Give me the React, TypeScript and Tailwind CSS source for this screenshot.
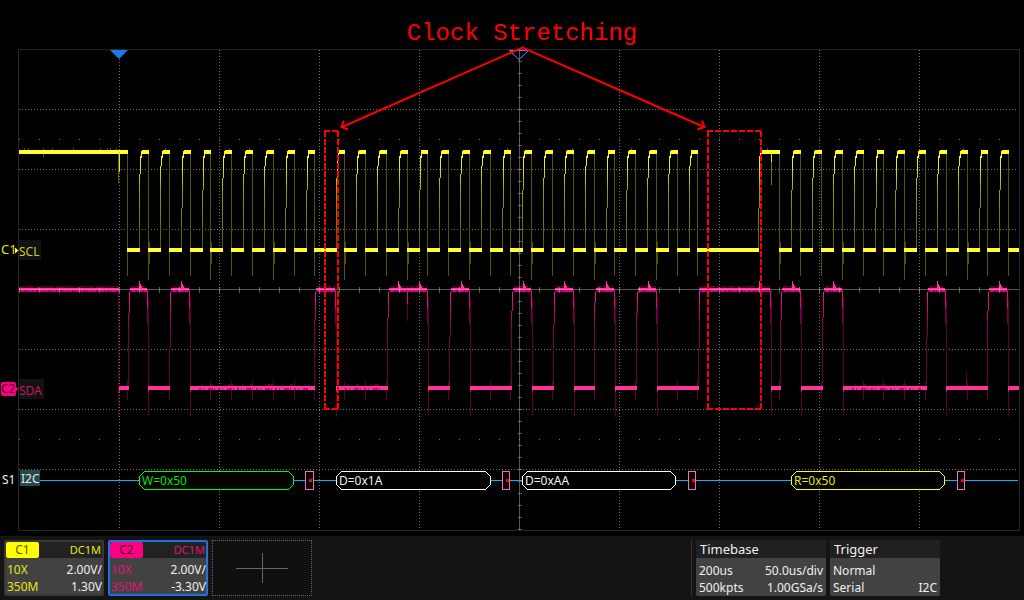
import React from "react";

const YELLOW = "#ffff33";
const PINK = "#ff3399";

const range = (count: number, start: number, step: number) =>
  Array.from({ length: count }, (_, i) => Math.round(start + i * step));

const firstFalls = range(10, 127.1, 20.8);
const secondFalls = range(18, 344.2, 20.78);
const thirdFalls = range(12, 779.3, 20.8);
const clockFalls = [...firstFalls, ...secondFalls, ...thirdFalls];

const clockLows: [number, number][] = [
  ...firstFalls.map((x, i): [number, number] => [x, i === 9 ? 336 : x + 12]),
  ...secondFalls.map((x, i): [number, number] => [x, i === 17 ? 758 : x + 12]),
  ...thirdFalls.map((x): [number, number] => [x, Math.min(x + 12, 1018)]),
];

type DataHigh = { from: number; to: number; peaks: number[] };

const dataHighs: DataHigh[] = [
  { from: 128, to: 147, peaks: [139] },
  { from: 169, to: 189, peaks: [181] },
  { from: 314, to: 335, peaks: [] },
  { from: 387, to: 427, peaks: [398, 419] },
  { from: 449, to: 469, peaks: [461] },
  { from: 511, to: 531, peaks: [523] },
  { from: 553, to: 573, peaks: [564] },
  { from: 594, to: 614, peaks: [606] },
  { from: 636, to: 656, peaks: [648] },
  { from: 698, to: 770, peaks: [759] },
  { from: 780, to: 800, peaks: [792] },
  { from: 822, to: 842, peaks: [833] },
  { from: 926, to: 945, peaks: [937] },
  { from: 987, to: 1007, peaks: [999] },
];

const dataLows: [number, number][] = [
  [119, 129],
  ...dataHighs.map((h, i): [number, number] => [
    h.to + 1,
    i + 1 < dataHighs.length ? dataHighs[i + 1].from + 1 : 1019,
  ]),
];

const packets = [
  { x: 139, w: 155, text: "W=0x50", color: "#00ff00", fill: "#00e600" },
  { x: 336, w: 155, text: "D=0x1A", color: "#ffffff", fill: "#f0f0f0" },
  { x: 522, w: 154, text: "D=0xAA", color: "#ffffff", fill: "#f0f0f0" },
  { x: 791, w: 154, text: "R=0x50", color: "#ffff00", fill: "#e6e600" },
];

const acks = [
  { x: 305, w: 8 },
  { x: 502, w: 7 },
  { x: 688, w: 7 },
  { x: 957, w: 7 },
];

function Grid() {
  return (
    <g shapeRendering="crispEdges">
      <rect x="18.5" y="49.5" width="1001" height="481" fill="none" stroke="#262626" />
      {range(9, 119, 100)
        .filter((x) => x !== 519)
        .map((x) => (
          <path key={x} d={`M${x + 0.5} 50V528`} stroke="#6e6e6e" strokeDasharray="1 2" />
        ))}
      {range(7, 109, 60)
        .filter((y) => y !== 289)
        .map((y) => (
          <path key={y} d={`M19 ${y + 0.5}H1017`} stroke="#6e6e6e" strokeDasharray="1 2" />
        ))}
      {[139, 439].map((y) => (
        <path key={y} d={`M19 ${y + 0.5}H1017`} stroke="#6e6e6e" strokeDasharray="1 19" />
      ))}
    </g>
  );
}

function Axes() {
  return (
    <g shapeRendering="crispEdges" fill="#cccccc" fillOpacity="0.42">
      <rect x="19" y="289" width="1000" height="1" />
      <rect x="519" y="50" width="1" height="480" />
      {range(50, 19, 20).map((x) => (
        <rect key={x} x={x} y="287" width="1" height="6" />
      ))}
      {range(40, 61, 12).map((y) => (
        <rect key={y} x="518" y={y} width="4" height="1" />
      ))}
    </g>
  );
}

function ClockTrace() {
  return (
    <g shapeRendering="crispEdges">
      {clockFalls.map((x, i) => (
        <g key={x}>
          <rect x={x} y="152" width="1" height={i % 3 === 1 ? 128 : 124} fill="#545400" />
          {i % 3 === 1 && <rect x={x + 1} y="242" width="1" height="22" fill="#545400" />}
          <rect
            x={i === 0 ? 119 : i === 28 ? 761 : x - 6}
            y="150"
            width={i === 0 ? 9 : i === 28 ? 19 : 7}
            height="4"
            fill={YELLOW}
          />
        </g>
      ))}
      {clockLows.map(([from, to], i) => {
        const split = [174, 166, 208, 190, 178][i % 5];
        return (
          <g key={from}>
            <rect x={from} y="248" width={to - from + 1} height="4" fill={YELLOW} />
            {to < 1018 && (
              <>
                <rect x={to} y={split} width="1" height={248 - split} fill="url(#clockRise)" />
                <rect x={to + 1} y="156" width="1" height={split - 156} fill="url(#clockRise)" />
                <rect x={to + 2} y="151" width="1" height="7" fill="#ffff00" />
              </>
            )}
          </g>
        );
      })}
      <rect x="19" y="150" width="100" height="4" fill={YELLOW} />
      <rect x="118" y="154" width="1" height="29" fill="#666600" />
      <rect x="119" y="152" width="1" height="20" fill="#e6e600" />
      <rect x="771" y="154" width="1" height="31" fill="#777700" />
      <rect x="771" y="152" width="1" height="10" fill="#e6e600" />
      {[24, 28, 43, 52, 73, 100, 107, 110, 116, 165, 229, 249, 507, 572, 631, 767, 963].map((x) => (
        <rect key={x} x={x} y="148" width="1" height="2" fill="#545400" />
      ))}
      <rect x="43" y="154" width="1" height="3" fill="#545400" />
    </g>
  );
}

function DataPlateau({ from, to }: { from: number; to: number }) {
  return (
    <g>
      <rect x={from} y="288" width={to - from} height="2" fill={PINK} />
      <rect x={from} y="290" width={to - from} height="2" fill="#99005c" />
      <path d={`M${from + 1} 287H${to}`} stroke="#590033" strokeWidth="2" strokeDasharray="5 1 8 2 3 1" />
      <path d={`M${from + 2} 291H${to}`} stroke="#e60080" strokeWidth="2" strokeDasharray="3 2 1 1 4 1" />
    </g>
  );
}

function DataTrace() {
  return (
    <g shapeRendering="crispEdges">
      {clockFalls.map((x) => {
        const isLow = dataLows.some(([from, to]) => x > from + 2 && x <= to);
        return isLow ? <rect key={x} x={x} y="381" width="1" height="19" fill="#590033" /> : null;
      })}
      {dataHighs.map(({ from, to, peaks }, i) => {
        const split = [313, 348, 320, 318, 337, 311, 324, 303][i % 8];
        return (
          <g key={from}>
            <rect x={from} y={split} width="1" height={386 - split} fill="url(#dataRise)" />
            <rect x={from + 1} y="292" width="1" height={split - 292} fill="url(#dataRise)" />
            <rect x={to} y="290" width="1" height="18" fill="#e60080" />
            <rect x={to} y="308" width="1" height="16" fill="#78004a" />
            <rect x={to + 1} y="298" width="1" height="119" fill="#590033" />
            <DataPlateau from={from + 2} to={to} />
            {peaks.map((x) => (
              <path key={x} d={`M${x} 281h1v3h1v2h1v3h-3z`} fill={PINK} />
            ))}
          </g>
        );
      })}
      <DataPlateau from={19} to={119} />
      <rect x="118" y="292" width="1" height="126" fill="#590033" />
      <rect x="407" y="290" width="1" height="14" fill="#e60080" />
      <rect x="407" y="304" width="1" height="17" fill="#590033" />
      <rect x="966" y="372" width="1" height="14" fill="#590033" />
      {dataLows.map(([from, to]) => (
        <g key={from}>
          <rect x={from} y="386" width={to - from} height="4" fill={PINK} />
          <rect x={from} y="390" width="1" height="2" fill="#e60080" />
          {to - from > 45 && (
            <>
              <path d={`M${from + 9} 389H${to - 6}`} stroke="#d9007a" strokeWidth="2" strokeDasharray="2 2 1 4 5 1 1 3" />
              <path d={`M${from + 12} 385H${to - 6}`} stroke="#590033" strokeWidth="2" strokeDasharray="1 7 3 12 1 2 5 9" />
            </>
          )}
        </g>
      ))}
    </g>
  );
}

function Decoder() {
  return (
    <g>
      <path d="M40 480.5H1018" stroke="#00b7ff" shapeRendering="crispEdges" />
      {packets.map(({ x, w, text, color, fill }) => (
        <g key={x}>
          <path
            d={`M${x + 0.5} 476.5l5 -5h${w - 11}l5 5v8l-5 5h-${w - 11}l-5 -5z`}
            fill="#000"
            stroke={color}
            shapeRendering="crispEdges"
          />
          <text x={x + 3} y="485" fill={fill} fontSize="12">
            {text}
          </text>
        </g>
      ))}
      {acks.map(({ x, w }) => (
        <g key={x} shapeRendering="crispEdges">
          <rect x={x + 0.5} y="471.5" width={w} height="18" fill="#000" stroke="#ff69b4" />
          <rect x={x + 4} y="479" width="3" height="3" fill="#ff0000" />
        </g>
      ))}
    </g>
  );
}

function Labels() {
  return (
    <g fontSize="12">
      <text x="1" y="254" fill="#e6e600" fontSize="13">C1</text>
      <path d="M15 247.500l3.500 3l-3.500 3z" fill="#ffff00" />
      <rect x="19" y="240" width="22" height="20" fill="#121212" />
      <text x="19" y="256" fill="#cccc1f">SCL</text>
      <rect x="1" y="382" width="15" height="14" rx="2" fill="#ff0080" />
      <path d="M15 386l3.500 3l-3.500 3z" fill="#ff0080" />
      <text x="1" y="393" fill="#45062a">C2</text>
      <rect x="19" y="379" width="25" height="20" fill="#121212" />
      <text x="19" y="395" fill="#cc0f6b">SDA</text>
      <text x="2" y="484" fill="#f0f0f0">S1</text>
      <rect x="20" y="470" width="20" height="16" fill="#244a4d" />
      <text x="21" y="483" fill="#e6e6e6">I2C</text>
    </g>
  );
}

function Annotations() {
  return (
    <g fill="none" stroke="#ff0000" strokeWidth="2">
      <path d="M342 127L522.500 47.500L704 127" />
      <path d="M344 120.500L341.500 127L348 129.500M702 120.500L704.500 127L697.500 129.500" />
      <g strokeDasharray="6 2" shapeRendering="crispEdges">
        <path d="M324 131H339M338 131V409M325 131V409M324 409H339" />
        <path d="M707 131H762M708 131V409M761 131V409M707 409H762" />
      </g>
    </g>
  );
}

function Scope() {
  return (
    <svg
      viewBox="0 46 1024 490"
      className="block h-auto w-full font-['Noto_Sans','Open_Sans',sans-serif]"
      role="img"
      aria-label="I2C capture"
    >
      <defs>
        <linearGradient id="clockRise" gradientUnits="userSpaceOnUse" x1="0" y1="152" x2="0" y2="250">
          <stop offset="0" stopColor="#ffff00" />
          <stop offset="0.18" stopColor="#e0e000" />
          <stop offset="0.4" stopColor="#999900" />
          <stop offset="1" stopColor="#545400" />
        </linearGradient>
        <linearGradient id="dataRise" gradientUnits="userSpaceOnUse" x1="0" y1="290" x2="0" y2="388">
          <stop offset="0" stopColor="#ff1a8c" />
          <stop offset="0.2" stopColor="#d10074" />
          <stop offset="0.4" stopColor="#80004d" />
          <stop offset="1" stopColor="#590033" />
        </linearGradient>
      </defs>
      <Grid />
      <ClockTrace />
      <DataTrace />
      <Axes />
      <path d="M110 50H128L119 59Z" fill="#1a7ae6" />
      <path d="M509.500 50.500H528.500L519 59.500Z" fill="none" stroke="#8080ff" />
      <Decoder />
      <Labels />
      <Annotations />
    </svg>
  );
}

type ChannelProps = {
  name: string;
  scale: string;
  offset: string;
  card: string;
  tag: string;
  text: string;
};

function Channel({ name, scale, offset, card, tag, text }: ChannelProps) {
  return (
    <button type="button" className={`flex h-14 w-[100px] flex-col rounded-xs border-2 bg-[#424242] text-left ${card}`}>
      <span className="flex h-4 w-full bg-[#222222]">
        <span className={`w-[33px] rounded-xs text-center text-xs leading-4 ${tag}`}>{name}</span>
        <span className={`flex-1 pr-px text-right text-[11px] leading-4 ${text}`}>DC1M</span>
      </span>
      <span className="mt-[3px] flex w-full justify-between pl-px text-xs leading-[17px] text-[#f0f0f0]">
        <span className={text}>10X</span>
        <span>{scale}</span>
      </span>
      <span className="flex w-full justify-between pl-px text-xs leading-[17px] text-[#f0f0f0]">
        <span className={text}>350M</span>
        <span>{offset}</span>
      </span>
    </button>
  );
}

type PanelProps = { title: string; rows: [string, string][]; width: string };

function Panel({ title, rows, width }: PanelProps) {
  return (
    <section className={`h-14 overflow-hidden rounded-xs bg-[#424242] text-[#f0f0f0] ${width}`}>
      <h2 className="h-[18px] bg-[#202020] px-1 text-[13px] leading-[19px]">{title}</h2>
      <dl className="pt-1 text-xs leading-[17px]">
        {rows.map(([left, right]) => (
          <div key={left} className="flex justify-between px-[3px]">
            <dt>{left}</dt>
            <dd>{right}</dd>
          </div>
        ))}
      </dl>
    </section>
  );
}

export default function App() {
  return (
    <main className="flex min-h-screen flex-col bg-black font-['Noto_Sans','Open_Sans',sans-serif]">
      <h1 className="h-[46px] pt-5 pl-5 text-center font-['Liberation_Mono',monospace] text-2xl leading-7 text-[#ff0000]">
        Clock Stretching
      </h1>
      <Scope />
      <footer className="flex flex-1 items-start gap-1 bg-[#141414] px-1 pt-1 pb-1">
        <Channel
          name="C1"
          scale="2.00V/"
          offset="1.30V"
          card="border-[#383838]"
          tag="bg-[#ffff00] text-[#57570a]"
          text="text-[#e6e61a]"
        />
        <Channel
          name="C2"
          scale="2.00V/"
          offset="-3.30V"
          card="border-[#1a75e0]"
          tag="bg-[#ff0080] text-[#45062a]"
          text="text-[#e0127a]"
        />
        <button
          type="button"
          aria-label="Add channel"
          className="flex h-14 w-[100px] items-center justify-center border border-dotted border-[#666666] bg-[#0f0f0f]"
        >
          <svg viewBox="0 0 52 30" className="h-[30px] w-[52px]" shapeRendering="crispEdges">
            <path d="M0 15.500H52M26.500 0V30" stroke="#666666" />
          </svg>
        </button>
        <div className="ml-auto flex gap-1 border-l border-[#333333] pr-20 pl-1">
          <Panel
            title="Timebase"
            width="w-[130px]"
            rows={[
              ["200us", "50.0us/div"],
              ["500kpts", "1.00GSa/s"],
            ]}
          />
          <Panel
            title="Trigger"
            width="w-[110px]"
            rows={[
              ["Normal", ""],
              ["Serial", "I2C"],
            ]}
          />
        </div>
      </footer>
    </main>
  );
}
